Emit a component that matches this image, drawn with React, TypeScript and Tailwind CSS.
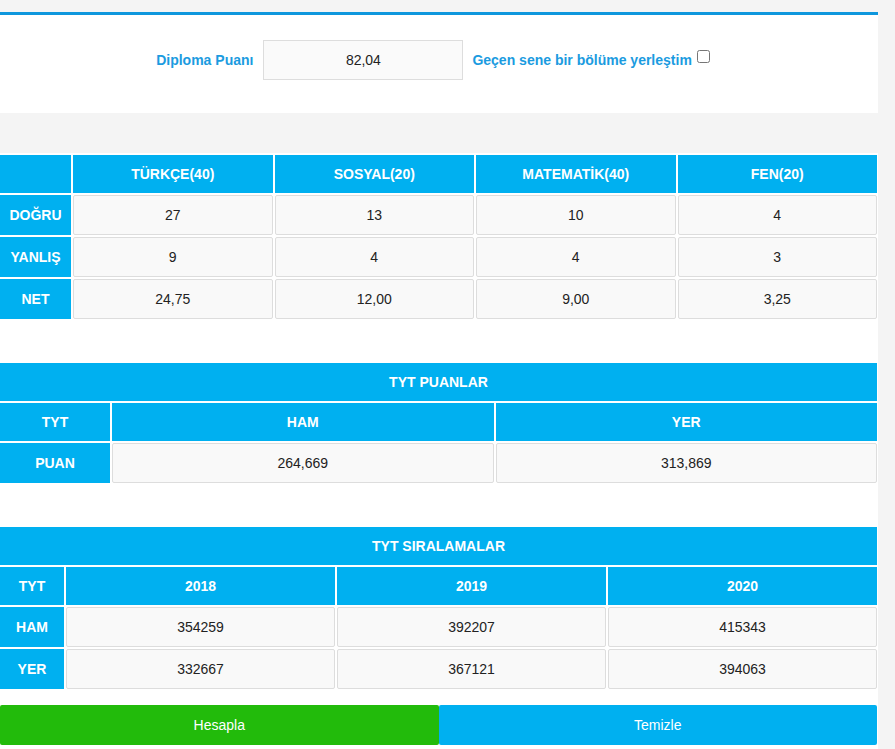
import { ReactNode } from "react";

const dersler = ["TÜRKÇE(40)", "SOSYAL(20)", "MATEMATİK(40)", "FEN(20)"];

const netRows = [
  { label: "DOĞRU", values: ["27", "13", "10", "4"] },
  { label: "YANLIŞ", values: ["9", "4", "4", "3"] },
  { label: "NET", values: ["24,75", "12,00", "9,00", "3,25"] },
];

const siralamaRows = [
  { label: "HAM", values: ["354259", "392207", "415343"] },
  { label: "YER", values: ["332667", "367121", "394063"] },
];

// blue header cell
const Head = ({ children, h = "h-[38px]", className = "" }: { children?: ReactNode; h?: string; className?: string }) => (
  <div className={`${h} flex items-center justify-center bg-[#00b0f0] text-white font-bold text-[14px] ${className}`}>
    {children}
  </div>
);

// grey data cell
const Cell = ({ children }: { children: ReactNode }) => (
  <div className="h-[40px] flex items-center justify-center bg-[#f9f9f9] border border-[#dddddd] rounded-[2px] text-[14px] text-[#222]">
    {children}
  </div>
);

export default function App() {
  return (
    <div className="min-h-[749px] bg-[#f4f4f4] pt-[12px]" style={{ fontFamily: '"Liberation Sans", Arial, sans-serif' }}>
      <div className="w-[878px] bg-white border-t-[3px] border-[#0e97dd]">
        {/* diploma */}
        <div className="h-[98px] flex items-start justify-center pt-[25px]">
          <label className="text-[14px] font-bold text-[#1b9be0] mt-[10px]">Diploma Puanı</label>
          <input
            className="ml-[10px] w-[200px] h-[40px] bg-[#fafafa] border border-[#dddddd] text-center text-[14px] text-[#222] outline-none"
            defaultValue="82,04"
          />
          <label className="ml-[9px] text-[14px] font-bold text-[#1b9be0] mt-[10px]">Geçen sene bir bölüme yerleştim</label>
          <input type="checkbox" className="ml-[5px] mt-[10px] mr-[12px] w-[13px] h-[13px]" />
        </div>

        <div className="h-[40px] bg-[#f4f4f4]" />

        <div className="pt-[2px] pr-[1px]">
          {/* net tablosu */}
          <div className="grid grid-cols-[71px_1fr_1fr_1fr_1fr] gap-[2px]">
            <Head />
            {dersler.map((d) => (
              <Head key={d}>{d}</Head>
            ))}
            {netRows.map((r) => (
              <>
                <Head key={r.label} h="h-[40px]">
                  {r.label}
                </Head>
                {r.values.map((v, i) => (
                  <Cell key={r.label + i}>{v}</Cell>
                ))}
              </>
            ))}
          </div>

          {/* puanlar */}
          <div className="mt-[44px] grid grid-cols-[110px_1fr_1fr] gap-[2px]">
            <Head className="col-span-3">TYT PUANLAR</Head>
            <Head>TYT</Head>
            <Head>HAM</Head>
            <Head>YER</Head>
            <Head h="h-[40px]">PUAN</Head>
            <Cell>264,669</Cell>
            <Cell>313,869</Cell>
          </div>

          {/* siralamalar */}
          <div className="mt-[44px] grid grid-cols-[64px_1fr_1fr_1fr] gap-[2px]">
            <Head className="col-span-4">TYT SIRALAMALAR</Head>
            <Head>TYT</Head>
            <Head>2018</Head>
            <Head>2019</Head>
            <Head>2020</Head>
            {siralamaRows.map((r) => (
              <>
                <Head key={r.label} h="h-[40px]">
                  {r.label}
                </Head>
                {r.values.map((v, i) => (
                  <Cell key={r.label + i}>{v}</Cell>
                ))}
              </>
            ))}
          </div>

          <div className="mt-[16px] flex h-[40px]">
            <button className="flex-1 bg-[#22bb0b] text-white text-[14px] rounded-[2px]">Hesapla</button>
            <button className="flex-1 bg-[#00b0f0] text-white text-[14px] rounded-[2px]">Temizle</button>
          </div>
          <div className="h-[4px]" />
        </div>
      </div>
    </div>
  );
}
